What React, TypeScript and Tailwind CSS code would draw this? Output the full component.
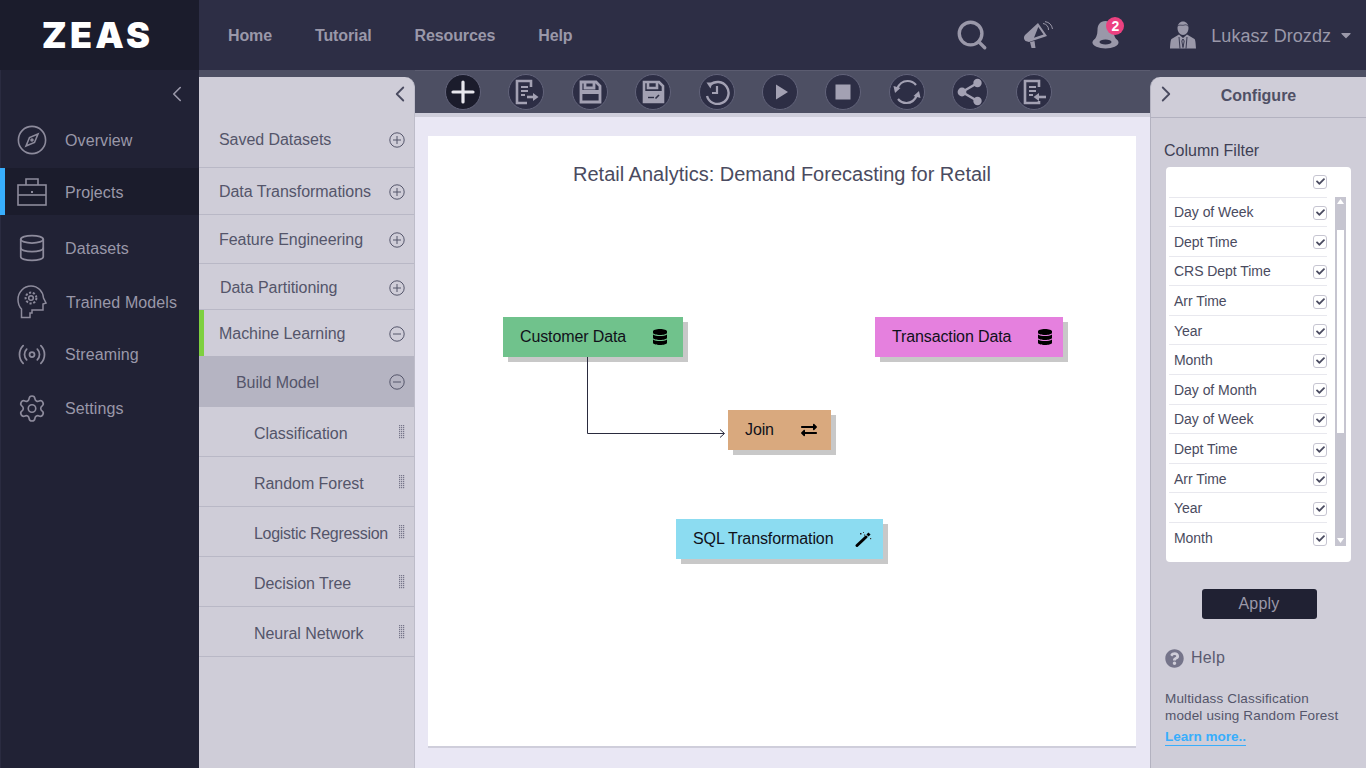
import React from "react";
import { ChevronLeft, ChevronRight, Database, Settings, Radio, Search } from "lucide-react";
import { FaDatabase, FaExchangeAlt, FaQuestionCircle, FaCheck, FaCaretDown } from "react-icons/fa";

const FONT = "font-['Liberation_Sans',Arial,sans-serif]";

function CircleSign({ minus }: { minus?: boolean }) {
  return (
    <svg width="16" height="16" viewBox="0 0 16 16" fill="none" stroke="#55566b" strokeWidth="1">
      <circle cx="8" cy="8" r="7.2" />
      <path d="M4 8H12" />
      {!minus && <path d="M8 4V12" />}
    </svg>
  );
}

function Grip() {
  const dots: React.ReactNode[] = [];
  for (let y = 0; y < 7; y++) {
    for (let x = 0; x < 3; x++) {
      dots.push(<rect key={`${x}-${y}`} x={x * 2} y={y * 2} width="1.2" height="1.2" fill="#77768a" />);
    }
  }
  return (
    <svg width="6" height="14" viewBox="0 0 6 14">
      {dots}
    </svg>
  );
}

function CompassIcon() {
  return (
    <svg width="30" height="30" viewBox="0 0 30 30" fill="none" stroke="#8d8b9c" strokeWidth="1.6">
      <circle cx="15" cy="15" r="13.6" />
      <path d="M21 9 L17.5 17.5 L9 21 L12.5 12.5 Z" />
      <circle cx="15" cy="15" r="1" fill="#8d8b9c" />
    </svg>
  );
}

function CaseIcon() {
  return (
    <svg width="30" height="30" viewBox="0 0 30 30" fill="none" stroke="#8d8b9c" strokeWidth="1.6">
      <rect x="1" y="8" width="28" height="20" />
      <path d="M1 18H29" />
      <path d="M9 8V2H21V8" />
      <rect x="14" y="14" width="2" height="2" fill="#8d8b9c" stroke="none" />
    </svg>
  );
}

function HeadIcon() {
  return (
    <svg width="30" height="34" viewBox="0 0 30 34" fill="none" stroke="#8d8b9c" strokeWidth="1.5">
      <path d="M4.5 32.5V24C2 21.5 1 18 1 14.5C1 7 7 1 14 1C21 1 26 6.5 26.5 13L29 18L26 19V25H15V28H13V32.5Z" />
      <circle cx="14" cy="13" r="2.3" />
      <circle cx="14" cy="13" r="5.4" strokeDasharray="2.2 1.6" strokeWidth="2" />
    </svg>
  );
}

const navItems = [
  { label: "Overview", icon: <CompassIcon />, row: "h-[56px] pl-[17px]", text: "" },
  { label: "Projects", icon: <CaseIcon />, row: "h-[47px] bg-[#1b1c2c] border-l-[5px] border-[#38aefc] pl-[12px]", text: "" },
  { label: "Datasets", icon: <Database size={32} strokeWidth={1.4} color="#8d8b9c" />, row: "h-[66px] pl-[17px]", text: "" },
  { label: "Trained Models", icon: <HeadIcon />, row: "h-[42px] pl-[17px]", text: "ml-[19px]" },
  { label: "Streaming", icon: <Radio size={35} strokeWidth={1.4} color="#8d8b9c" />, row: "h-[62px] pl-[17px]", text: "" },
  { label: "Settings", icon: <Settings size={35} strokeWidth={1.3} color="#8d8b9c" />, row: "h-[46px] pl-[17px]", text: "" },
];

function Sidebar() {
  return (
    <aside className="w-[199px] h-full shrink-0 bg-[#212235] shadow-[inset_1px_0_0_#2a2b40]">
      <div className="h-[42px] flex items-center justify-end pr-[9px] pt-[6px]">
        <ChevronLeft size={26} strokeWidth={1.5} color="#9a98a9" />
      </div>
      {navItems.map((n) => (
        <div key={n.label} className={`flex items-center ${n.row}`}>
          <span className="w-[30px] flex justify-center shrink-0">{n.icon}</span>
          <span className={`pt-[2px] text-[16px] text-[#9a98a9] tracking-[0.1px] whitespace-nowrap ${n.text || "ml-[18px]"}`}>{n.label}</span>
        </div>
      ))}
    </aside>
  );
}

const menuTop = [
  { label: "Saved Datasets", row: "h-[91px] pt-[36px]", pad: "pl-[20px]" },
  { label: "Data Transformations", row: "h-[47px] pt-[2px]", pad: "pl-[20px]" },
  { label: "Feature Engineering", row: "h-[49px] pt-[2px]", pad: "pl-[20px]" },
  { label: "Data Partitioning", row: "h-[46px] pt-[2px]", pad: "pl-[21px]" },
];
const subItems = [
  { label: "Classification", cls: "" },
  { label: "Random Forest", cls: "" },
  { label: "Logistic Regression", cls: "tracking-[-0.3px]" },
  { label: "Decision Tree", cls: "" },
  { label: "Neural Network", cls: "" },
];

function MenuPanel() {
  return (
    <section className="relative w-[216px] h-[691px] mt-[7px] shrink-0 bg-[#cfcdd8] rounded-tr-[10px] border-r border-[#bdbcc9] text-[16px] text-[#54556a] tracking-[-0.05px]">
      <span className="absolute right-[1px] top-[4px]">
        <ChevronLeft size={26} strokeWidth={1.7} color="#4a4b60" />
      </span>
      {menuTop.map((m) => (
        <div key={m.label} className={`flex items-center justify-between pr-[9px] border-b border-[#b9b8c6] ${m.row} ${m.pad}`}>
          <span className="whitespace-nowrap">{m.label}</span>
          <CircleSign />
        </div>
      ))}
      <div className="h-[46px] flex items-center justify-between pl-[15px] pr-[9px] pt-[2px] border-l-[5px] border-[#7ed03f]">
        <span>Machine Learning</span>
        <CircleSign minus />
      </div>
      <div className="h-[51px] flex items-center justify-between pl-[37px] pr-[9px] bg-[#b5b4c2]">
        <span className="pt-[2px]">Build Model</span>
        <CircleSign minus />
      </div>
      {subItems.map((s) => (
        <div key={s.label} className="h-[50px] flex items-center justify-between pl-[55px] pr-[9px] border-b border-[#b9b8c6]">
          <span className={`whitespace-nowrap pt-[4px] ${s.cls}`}>{s.label}</span>
          <Grip />
        </div>
      ))}
    </section>
  );
}

const IC = "#a3a1b3";
const toolIcons: React.ReactNode[] = [
  <svg key="a" width="26" height="26" viewBox="0 0 26 26"><path d="M13 3V23M3 13H23" stroke="#e8e7ee" strokeWidth="3.2" strokeLinecap="round" /></svg>,
  <svg key="b" width="26" height="26" viewBox="0 0 26 26" fill="none" stroke={IC}>
    <path d="M18 8V2H4V24H14" strokeWidth="2.6" />
    <path d="M8 8H15M8 12H15M8 16H12" strokeWidth="2" />
    <path d="M14 18H21" strokeWidth="2.6" />
    <path d="M20 14L25.5 18L20 22Z" fill={IC} stroke="none" />
  </svg>,
  <svg key="c" width="24" height="24" viewBox="0 0 24 24" fill="none" stroke={IC} strokeWidth="2.8">
    <path d="M3 2H18L22 6V22H3Z" />
    <path d="M7 2V8H16V2" />
    <path d="M3 12.5H22" strokeWidth="2.4" />
    <path d="M3 10H22V14H3Z" fill={IC} stroke="none" />
  </svg>,
  <svg key="d" width="24" height="24" viewBox="0 0 24 24" fill="none" stroke={IC} strokeWidth="2.6">
    <path d="M3 2H18L22 6V22H3Z" />
    <path d="M7 2V8H16V2" />
    <path d="M3 11H22V22H3Z" fill={IC} stroke="none" />
    <path d="M7 17.5H13" stroke="#2d2e45" strokeWidth="1.4" />
    <path d="M14.5 18.5L18 15" stroke="#2d2e45" strokeWidth="1.6" />
  </svg>,
  <svg key="e" width="26" height="26" viewBox="0 0 26 26" fill="none" stroke={IC} strokeWidth="2.4">
    <path d="M6 6A11 11 0 1 1 3 17" />
    <path d="M2.5 3.5L8.5 3.5L6.5 9.5Z" fill={IC} stroke="none" />
    <path d="M13 7V14H8" strokeWidth="2.2" />
  </svg>,
  <svg key="f" width="24" height="24" viewBox="0 0 24 24"><path d="M8 4.5L20 12L8 19.5Z" fill={IC} /></svg>,
  <svg key="g" width="24" height="24" viewBox="0 0 24 24"><rect x="4.5" y="4.5" width="15" height="15" fill={IC} /></svg>,
  <svg key="h" width="30" height="28" viewBox="0 0 30 28" fill="none" stroke={IC} strokeWidth="2.2">
    <path d="M5 11C7 6 11 3 15.5 3C19 3 22 4.5 24 7" />
    <path d="M25 17C23 22 19 25 14.5 25C11 25 8 23.5 6 21" />
    <path d="M1.5 8L8.5 10L3 15Z" fill={IC} stroke="none" />
    <path d="M28.5 20L21.5 18L27 13Z" fill={IC} stroke="none" />
  </svg>,
  <svg key="i" width="26" height="28" viewBox="0 0 26 28" fill={IC}>
    <circle cx="20.5" cy="5" r="4.2" />
    <circle cx="5" cy="14" r="4.4" />
    <circle cx="20.5" cy="23" r="4.2" />
    <path d="M5 14L20.5 5M5 14L20.5 23" stroke={IC} strokeWidth="2.6" />
  </svg>,
  <svg key="j" width="26" height="26" viewBox="0 0 26 26" fill="none" stroke={IC}>
    <path d="M18 8V2H4V24H18V22" strokeWidth="2.6" />
    <path d="M8 8H15M8 12H15M8 16H12" strokeWidth="2" />
    <path d="M16 18H25" strokeWidth="2.6" />
    <path d="M18 14L12.5 18L18 22Z" fill={IC} stroke="none" />
  </svg>,
];

function Toolbar() {
  return (
    <div className="h-[43px] shrink-0 flex items-center gap-[27.4px] pl-[30px] border-t border-[#5b5c70]">
      {toolIcons.map((ic, i) => (
        <button
          key={i}
          className={`w-[36px] h-[36px] shrink-0 rounded-full border border-[#62637a] flex items-center justify-center ${i === 0 ? "bg-[#1b1c2c]" : "bg-[#2d2e45]"}`}
        >
          {ic}
        </button>
      ))}
    </div>
  );
}

function Wand() {
  return (
    <svg width="18" height="16" viewBox="0 0 18 16" className="block">
      <path d="M2 14.5L11 6" stroke="#000" strokeWidth="3" strokeLinecap="round" />
      <path d="M12.5 4.5L14.5 2.5" stroke="#000" strokeWidth="3" />
      <rect x="5" y="2" width="1.5" height="1.5" fill="#222" />
      <rect x="8" y="1" width="1" height="1" fill="#444" />
      <rect x="9" y="3.5" width="1.2" height="1.2" fill="#333" />
      <rect x="15" y="7" width="1.2" height="1.2" fill="#333" />
    </svg>
  );
}

function Node({ label, icon, cls, iconCls }: { label: string; icon: React.ReactNode; cls: string; iconCls: string }) {
  return (
    <div className={`absolute h-[40px] flex items-center pl-[17px] text-[16px] text-[#10111a] tracking-[-0.12px] shadow-[5px_5px_0_#c8c8c8] ${cls}`}>
      <span className="whitespace-nowrap">{label}</span>
      <span className={`absolute top-1/2 -translate-y-1/2 ${iconCls}`}>{icon}</span>
    </div>
  );
}

function Canvas() {
  return (
    <div className="flex-1 min-h-0 bg-[#e9e7f4] border-t-4 border-[#cfcedb] pt-[19px] pl-[13px] pr-[14px] pb-[20px]">
      <div className="relative h-[612px] bg-white border-b-2 border-[#cfcedb]">
        <h1 className="pt-[26px] text-center text-[20px] leading-[24px] text-[#4a4b60] font-normal">
          Retail Analytics: Demand Forecasting for Retail
        </h1>
        <Node label="Customer Data" cls="left-[75px] top-[181px] w-[180px] bg-[#70c28c]" iconCls="right-[15px] text-[#000]" icon={<FaDatabase size={16} />} />
        <Node label="Transaction Data" cls="left-[447px] top-[181px] w-[188px] bg-[#e580de]" iconCls="right-[10px] text-[#000]" icon={<FaDatabase size={16} />} />
        <Node label="Join" cls="left-[300px] top-[274px] w-[103px] bg-[#d9a97e]" iconCls="right-[14px] text-[#000]" icon={<FaExchangeAlt size={16} />} />
        <Node label="SQL Transformation" cls="left-[248px] top-[383px] w-[207px] bg-[#8cdcf1]" iconCls="right-[10px] text-[#000]" icon={<Wand />} />
        <svg className="absolute left-[150px] top-[221px]" width="150" height="84" viewBox="0 0 150 84" fill="none" stroke="#2a2b3e">
          <path d="M9.5 0V76.5H146" />
          <path d="M142 72.5L146.5 76.5L142 80.5" />
        </svg>
      </div>
    </div>
  );
}

const columns = ["", "Day of Week", "Dept Time", "CRS Dept Time", "Arr Time", "Year", "Month", "Day of Month", "Day of Week", "Dept Time", "Arr Time", "Year", "Month"];

function Check({ cls }: { cls: string }) {
  return (
    <span className={`w-[14px] h-[14px] rounded-[3px] border border-[#c6c5d1] bg-white flex items-center justify-center shrink-0 ${cls}`}>
      <FaCheck size={9} color="#4a4b60" />
    </span>
  );
}

function ConfigPanel() {
  return (
    <section className="w-[216px] h-[691px] mt-[7px] shrink-0 bg-[#cfcdd8] rounded-tl-[10px] border-l border-[#b3b2c0]">
      <header className="h-[41px] flex items-center relative border-b border-[#b3b2c0] pb-[2px]">
        <span className="absolute left-[2px] top-[4px]">
          <ChevronRight size={26} strokeWidth={1.7} color="#4a4b60" />
        </span>
        <span className="w-full text-center text-[16px] font-bold text-[#4f5065]">Configure</span>
      </header>
      <div className="pl-[13px] pt-[24px] text-[16px] leading-[18px] text-[#3e3f54]">Column Filter</div>
      <div className="relative mt-[7px] ml-[15px] w-[185px] h-[395px] bg-white rounded-[4px] pl-[3px] pr-[24px]">
        {columns.map((c, i) => (
          <div
            key={i}
            className={`flex items-center justify-between pl-[5px] text-[14px] text-[#4a4b60] tracking-[-0.04px] ${i === 0 ? "h-[30.5px]" : "h-[29.6px]"} ${i < columns.length - 1 ? "border-b border-[#e8e8ee]" : ""}`}
          >
            <span className="whitespace-nowrap pt-[2px]">{c}</span>
            <Check cls={i === 0 ? "" : "mt-[2px]"} />
          </div>
        ))}
        <div className="absolute left-[169px] top-[30px] w-[11px] h-[349px] bg-[#c6c5d0]">
          <div className="absolute left-[2px] top-[33px] w-[7px] h-[203px] bg-white" />
          <svg className="absolute left-[2px] top-[2px]" width="7" height="5" viewBox="0 0 7 5"><path d="M3.5 0L7 5H0Z" fill="#fff" /></svg>
          <svg className="absolute left-[2px] bottom-[3px]" width="7" height="5" viewBox="0 0 7 5"><path d="M3.5 5L7 0H0Z" fill="#fff" /></svg>
        </div>
      </div>
      <div className="flex justify-center mt-[27px] pl-[1px]">
        <button className="w-[115px] h-[30px] rounded-[3px] bg-[#202133] text-[16px] text-[#9a98a9] tracking-[0.2px]">Apply</button>
      </div>
      <div className="flex items-center gap-[7px] mt-[27px] pl-[14px] text-[16px] text-[#5a5b70] tracking-[0.3px]">
        <FaQuestionCircle size={19} color="#75748a" />
        <span>Help</span>
      </div>
      <p className="mt-[20px] pl-[14px] text-[13.5px] leading-[17px] text-[#54556a] tracking-[0.15px] whitespace-nowrap">
        Multidass Classification
        <br />
        model using Random Forest
      </p>
      <a className="block w-fit ml-[14px] mt-[5px] text-[13.5px] leading-[16px] font-bold text-[#38aefc] border-b border-[#38aefc]">Learn more..</a>
    </section>
  );
}

function Megaphone() {
  return (
    <svg width="32" height="28" viewBox="0 0 32 28" className="block" fill="#9a98a9">
      <path fillRule="evenodd" d="M15 2L24 15L6 21L2.5 20C0.5 18 0.5 16 2 14ZM15.3 6L11 16.8L20.5 13.5Z" />
      <path d="M7 21L11.5 20L12.5 27H8.5Z" />
      <path d="M20 2.5A6 6 0 0 1 25.5 9M22 0.6A9 9 0 0 1 29.5 8" fill="none" stroke="#9a98a9" strokeWidth="1" />
    </svg>
  );
}

function Bell() {
  return (
    <div className="relative w-[28px] h-[30px]">
      <svg width="27" height="28" viewBox="0 0 27 28" className="absolute left-0 top-[1px]">
        <path d="M13.5 0C8 0 5.5 4 5.5 9C5.5 14 4 17 1.5 20H25.5C23 17 21.5 14 21.5 9C21.5 4 19 0 13.5 0Z" fill="#9a98a9" />
        <ellipse cx="13.5" cy="21.5" rx="13" ry="6" fill="#9a98a9" />
        <ellipse cx="13.5" cy="21" rx="6" ry="2.6" fill="#2d2e45" />
      </svg>
      <span className="absolute left-[14px] -top-[3px] w-[18px] h-[18px] rounded-full bg-[#ec4180] text-white text-[14px] font-bold leading-[18px] text-center">2</span>
    </div>
  );
}

function UserIcon() {
  return (
    <svg width="26" height="28" viewBox="0 0 26 28" className="block" fill="#9a98a9">
      <path d="M7.5 7C7.5 3 10 0.5 13 0.5C16 0.5 18.5 3 18.5 7C18.5 11 16 14 13 14C10 14 7.5 11 7.5 7Z" />
      <path d="M9 13.5L1.5 18C0.5 19 0.3 23 0 27.5H26C25.7 23 25.5 19 24.5 18L17 13.5L13 17Z" />
      <path d="M7.5 5.5C9 3 12 5 14.5 4C16 3.5 17 4 18.5 5.5" fill="none" stroke="#2d2e45" strokeWidth="0.8" />
      <path d="M9 16L10 27.5M17 16L16 27.5M13 18L11.8 20L13 26.5L14.2 20Z" fill="none" stroke="#2d2e45" strokeWidth="0.9" />
    </svg>
  );
}

export default function App() {
  return (
    <div className={`w-[1366px] h-[768px] overflow-hidden flex flex-col bg-[#4d4f63] ${FONT}`}>
      <header className="h-[70px] shrink-0 flex items-center bg-[#2d2e45]">
        <div className="w-[199px] h-full shrink-0 bg-[#1b1c2c] flex items-center justify-center pr-[4px]">
          <span className="font-['Inter',sans-serif] font-black text-[36px] leading-none tracking-[3.2px] text-white">ZEAS</span>
        </div>
        <nav className="flex items-center gap-[43px] pl-[29px] pt-[2px] text-[16px] font-bold text-[#9a98a9] tracking-[-0.12px]">
          <span>Home</span>
          <span>Tutorial</span>
          <span>Resources</span>
          <span>Help</span>
        </nav>
        <div className="ml-auto flex items-center pr-[12px]">
          <Search size={34} strokeWidth={2.4} color="#9a98a9" />
          <span className="ml-[34px]"><Megaphone /></span>
          <span className="ml-[37px]"><Bell /></span>
          <span className="ml-[50px]"><UserIcon /></span>
          <span className="ml-[15px] pt-[2px] text-[18px] text-[#9a98a9] tracking-[0.05px]">Lukasz Drozdz</span>
          <span className="ml-[7px]"><FaCaretDown size={16} color="#9a98a9" /></span>
        </div>
      </header>
      <main className="flex-1 min-h-0 flex">
        <Sidebar />
        <MenuPanel />
        <div className="flex-1 min-w-0 flex flex-col">
          <Toolbar />
          <Canvas />
        </div>
        <ConfigPanel />
      </main>
    </div>
  );
}
